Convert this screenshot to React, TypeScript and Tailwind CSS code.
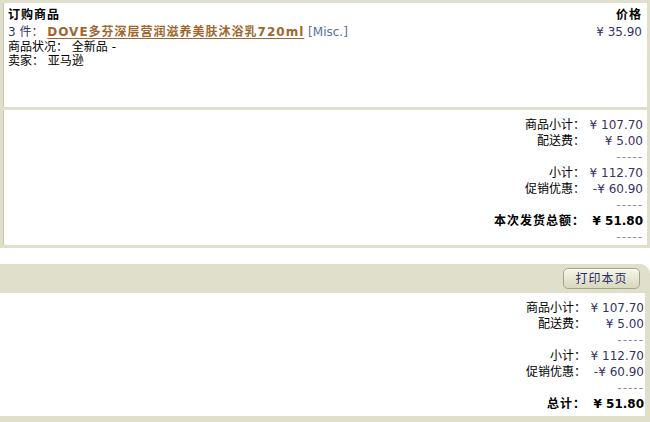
import React from "react";

const font = { fontFamily: '"DejaVu Sans", Verdana, "Noto Sans CJK SC", sans-serif' };

type Row = { label: string; value: string; bold?: boolean; dash?: boolean };

function Totals({ rows }: { rows: Row[] }) {
  return (
    <div className="flex justify-end">
      <div className="grid grid-cols-[auto_58px] text-[12px] leading-[16px]">
        {rows.map((r, i) =>
          r.dash ? (
            <React.Fragment key={i}>
              <div />
              <div className="text-right text-[#8a8aa8] tracking-[1px]">-----</div>
            </React.Fragment>
          ) : (
            <React.Fragment key={i}>
              <div className={`text-right text-black ${r.bold ? "font-bold tracking-[1px]" : ""}`}>{r.label}</div>
              <div className={`text-right whitespace-nowrap ${r.bold ? "font-bold text-black" : "text-[#333366]"}`}>
                {r.value}
              </div>
            </React.Fragment>
          )
        )}
      </div>
    </div>
  );
}

export default function App() {
  return (
    <div className="w-[650px] h-[422px] bg-white overflow-hidden" style={font}>
      <div className="bg-[#dfdfcc] p-[3px] flex flex-col gap-[3px]">
        <div className="bg-white h-[104px] border-l border-[#c8c8b4] px-[4px] pt-[4px] flex justify-between">
          <div>
            <div className="text-[12px] font-bold tracking-[1px] leading-[16px] text-black">订购商品</div>
            <div className="text-[12px] leading-[16px] mt-[1px] text-[#333366] whitespace-nowrap">
              3 件：{" "}
              <a className="font-bold tracking-[1px] text-[#a0662d] underline underline-offset-2">DOVE多芬深层营润滋养美肤沐浴乳720ml</a>{" "}
              <span className="text-[#5a6ea0]">[Misc.]</span>
            </div>
            <div className="text-[12px] leading-[14px] text-black">商品状况：&nbsp;全新品 -</div>
            <div className="text-[12px] leading-[14px] text-black">卖家：&nbsp;亚马逊</div>
          </div>
          <div className="text-right">
            <div className="text-[12px] font-bold tracking-[1px] leading-[16px] text-black pr-[1px]">价格</div>
            <div className="text-[12px] leading-[16px] mt-[1px] text-[#333366] pr-[1px]">¥ 35.90</div>
          </div>
        </div>
        <div className="bg-white h-[135px] border-l border-[#c8c8b4] pt-[7px] pr-[4px]">
          <Totals
            rows={[
              { label: "商品小计：", value: "¥ 107.70" },
              { label: "配送费：", value: "¥ 5.00" },
              { label: "", value: "", dash: true },
              { label: "小计：", value: "¥ 112.70" },
              { label: "促销优惠：", value: "-¥ 60.90" },
              { label: "", value: "", dash: true },
              { label: "本次发货总额：", value: "¥ 51.80", bold: true },
              { label: "", value: "", dash: true },
            ]}
          />
        </div>
      </div>

      <div className="h-[16px]" />

      <div className="bg-[#dfdfcc] rounded-tr-[10px] pr-[5px] pb-[6px]">
        <div className="h-[29px] flex items-center justify-end pr-[5px]">
          <button className="h-[21px] w-[77px] rounded-[5px] border border-[#a5a58c] bg-gradient-to-b from-[#f6f6e8] to-[#d8d8bc] text-[12px] tracking-[1px] text-[#2c2c6a] shadow-[inset_0_1px_0_#ffffff]">
            打印本页
          </button>
        </div>
        <div className="bg-white h-[123px] pt-[7px] pr-[1px]">
          <Totals
            rows={[
              { label: "商品小计：", value: "¥ 107.70" },
              { label: "配送费：", value: "¥ 5.00" },
              { label: "", value: "", dash: true },
              { label: "小计：", value: "¥ 112.70" },
              { label: "促销优惠：", value: "-¥ 60.90" },
              { label: "", value: "", dash: true },
              { label: "总计：", value: "¥ 51.80", bold: true },
            ]}
          />
        </div>
      </div>
    </div>
  );
}
